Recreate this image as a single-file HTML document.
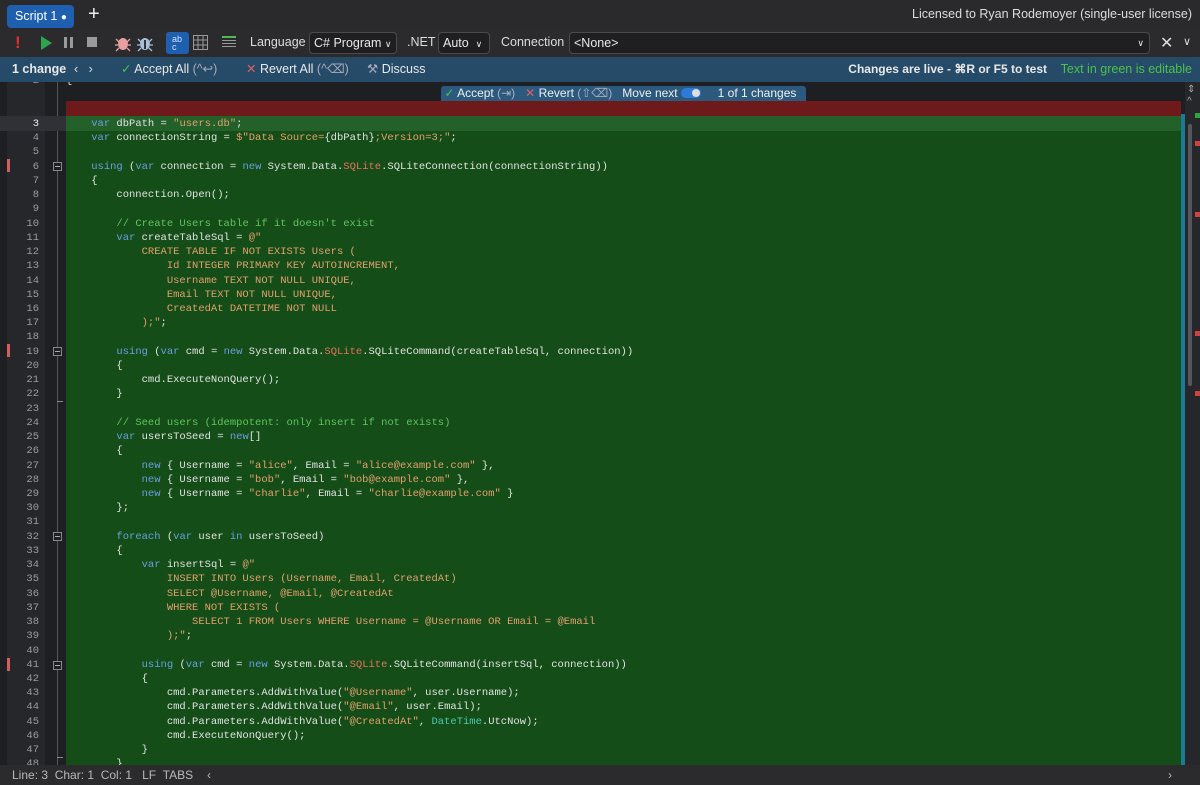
<!DOCTYPE html>
<html><head><meta charset="utf-8"><style>
*{margin:0;padding:0;box-sizing:border-box}
body{width:1200px;height:785px;background:#2b2b2e;font-family:"Liberation Sans",sans-serif;color:#dcdcdc;position:relative;overflow:hidden;font-size:12.5px}
.abs{position:absolute}
.top{left:0;top:0;width:1200px;height:30px;background:#2a2a2d}
.tab{left:7px;top:5px;width:67px;height:23px;background:#1f5faf;border-radius:4px;color:#fff;font-size:12.5px;line-height:23px;padding-left:8px}
.tb{left:0;top:30px;width:1200px;height:27px;background:#2b2b2e}
.sel{border:1px solid #4a4a4e;border-radius:4px;background:#1f1f22;height:22px;line-height:20px;padding-left:4px;color:#e8e8e8;font-size:12.5px}
.chg{left:0;top:57px;width:1200px;height:25px;background:#264b69;font-size:12.5px;line-height:25px}
.ed{left:0;top:82px;width:1200px;height:683px;background:#1e1f22;overflow:hidden}
.code{position:absolute;left:0;width:1200px;font-family:"Liberation Mono",monospace;font-size:10.5px;}
.ln{position:absolute;left:0;height:14.23px;line-height:14.23px;width:1200px;white-space:pre}
.num{position:absolute;left:0;width:39px;text-align:right;color:#9a9ca0}
.tx{position:absolute;left:66px;color:#e2e2e2}
.k{color:#6a9ee0}.s{color:#e2a06e}.c{color:#5fc45f}.r{color:#e8705f}.t{color:#4ec9b0}
.st{left:0;top:765px;width:1200px;height:20px;background:#2b2b2e;font-size:12px;color:#b8b8b8;line-height:20px}
</style></head><body>
<div class="abs top"></div>
<div class="abs tab">Script 1 <span style="font-size:10px">●</span></div>
<div class="abs" style="left:88px;top:3px;font-size:20px;color:#eee">+</div>
<div class="abs" style="right:8px;top:7px;font-size:12.5px;color:#ddd">Licensed to Ryan Rodemoyer (single-user license)</div>

<div class="abs tb"></div>
<div class="abs" style="left:15px;top:33px;color:#e03030;font-weight:bold;font-size:17px">!</div>
<svg class="abs" style="left:40px;top:36px" width="12" height="14"><path d="M1 0 L12 7 L1 14Z" fill="#2ea44f"/></svg>
<div class="abs" style="left:64px;top:37px;width:3px;height:11px;background:#9a9a9a"></div>
<div class="abs" style="left:70px;top:37px;width:3px;height:11px;background:#9a9a9a"></div>
<div class="abs" style="left:87px;top:37px;width:10px;height:10px;background:#9a9a9a"></div>
<svg class="abs" style="left:114px;top:34px" width="18" height="18"><ellipse cx="9" cy="10" rx="5" ry="6" fill="#e8a0a0"/><path d="M2 5L5 8M16 5L13 8M1 11H4M17 11H14M2 17L5 14M16 17L13 14" stroke="#e8a0a0" stroke-width="1.3"/></svg>
<svg class="abs" style="left:136px;top:34px" width="18" height="18"><ellipse cx="9" cy="10" rx="5" ry="6" fill="#a8c0d8"/><path d="M2 5L5 8M16 5L13 8M1 11H4M17 11H14M2 17L5 14M16 17L13 14" stroke="#a8c0d8" stroke-width="1.3"/><path d="M9 6V15" stroke="#333" stroke-width="2"/></svg>
<div class="abs" style="left:166px;top:32px;width:23px;height:22px;background:#1f5faf;border-radius:3px;color:#cfe0ff;font-size:9px;line-height:8px;padding:3px 0 0 6px">ab<br>c</div>
<svg class="abs" style="left:193px;top:35px" width="15" height="15"><rect x="0.5" y="0.5" width="14" height="14" fill="none" stroke="#999"/><path d="M5 0V15M10 0V15M0 5H15M0 10H15" stroke="#999"/></svg>
<div class="abs" style="left:222px;top:36px;width:14px;height:2px;background:#4cbb4c"></div>
<div class="abs" style="left:222px;top:40px;width:14px;height:1px;background:#999"></div>
<div class="abs" style="left:222px;top:43px;width:14px;height:1px;background:#999"></div>
<div class="abs" style="left:222px;top:46px;width:14px;height:1px;background:#999"></div>
<div class="abs" style="left:250px;top:35px;color:#ddd">Language</div>
<div class="abs sel" style="left:309px;top:32px;width:88px">C# Program <span style="font-size:9px">∨</span></div>
<div class="abs" style="left:407px;top:35px;color:#ddd">.NET</div>
<div class="abs sel" style="left:438px;top:32px;width:52px">Auto &nbsp;<span style="font-size:9px">∨</span></div>
<div class="abs" style="left:501px;top:35px;color:#ddd">Connection</div>
<div class="abs sel" style="left:569px;top:32px;width:581px">&lt;None&gt;<span style="position:absolute;right:5px;font-size:9px">∨</span></div>
<div class="abs" style="left:1160px;top:33px;font-size:16px;color:#ddd">✕</div>
<div class="abs" style="left:1183px;top:35px;font-size:11px;color:#ddd">∨</div>

<div class="abs chg"></div>
<div class="abs" style="left:12px;top:57px;line-height:25px;font-weight:bold;color:#e8e8e8">1 change</div>
<div class="abs" style="left:74px;top:57px;line-height:25px;color:#ddd">‹ &nbsp; ›</div>
<div class="abs" style="left:121px;top:57px;line-height:25px;color:#e8e8e8"><span style="color:#4cc04c">✓</span> Accept All <span style="color:#aab">(^↩)</span></div>
<div class="abs" style="left:246px;top:57px;line-height:25px;color:#e8e8e8"><span style="color:#e06060">✕</span> Revert All <span style="color:#aab">(^⌫)</span></div>
<div class="abs" style="left:367px;top:57px;line-height:25px;color:#e8e8e8"><span style="color:#aab">⚒</span> Discuss</div>
<div class="abs" style="right:153px;top:57px;line-height:25px;color:#e8e8e8;font-weight:bold;font-size:12px">Changes are live - ⌘R or F5 to test</div>
<div class="abs" style="right:8px;top:57px;line-height:25px;color:#4cc04c;font-size:12.5px">Text in green is editable</div>

<div class="abs ed">
  <div class="abs" style="left:7px;top:0;width:38px;height:683px;background:#26272b"></div>
  <div class="abs" style="left:45px;top:0;width:21px;height:683px;background:#1e1f22"></div>
  <div class="abs" style="left:57px;top:0;width:1px;height:683px;background:#555"></div>
  <div class="abs" style="left:66px;top:19px;width:1115px;height:15px;background:#6e1a1a"></div>
  <div class="abs" style="left:66px;top:34px;width:1115px;height:649px;background:#154d18"></div>
  <div class="abs" style="left:0;top:34px;width:66px;height:15px;background:#303136"></div>
  <div class="abs" style="left:66px;top:34px;width:1115px;height:15px;background:#23602a"></div>
  <div class="abs" style="left:441px;top:4px;width:365px;height:15px;background:#2c5a7e;border-radius:3px 3px 0 0;font-family:'Liberation Sans',sans-serif;font-size:12px;line-height:15px;color:#eee;white-space:pre"> <span style="color:#4cc04c">✓</span> Accept <span style="color:#aab">(⇥)</span>   <span style="color:#e06060">✕</span> Revert <span style="color:#aab">(⇧⌫)</span>   Move next <span style="display:inline-block;width:20px;height:10px;background:#2f7ad8;border-radius:5px;vertical-align:-1px;position:relative"><span style="position:absolute;right:1px;top:1px;width:8px;height:8px;border-radius:4px;background:#ddd"></span></span>     1 of 1 changes</div>
  <div class="abs" style="left:1181px;top:32px;width:4px;height:651px;background:#1a7a9a"></div>
  <div class="abs" style="left:1185px;top:0;width:15px;height:683px;background:#26272b"></div>
  <div class="abs" style="left:1188px;top:42px;width:4px;height:262px;background:#55575d;border-radius:2px"></div>
  <div class="abs" style="left:1187px;top:2px;font-size:10px;color:#aaa">⇕</div>
  <div class="abs" style="left:1187px;top:14px;font-size:10px;color:#aaa">^</div>
  <div class="abs" style="left:1195px;top:31px;width:5px;height:5px;background:#2ea43a"></div>
  <div class="abs" style="left:1195px;top:59px;width:5px;height:5px;background:#d04040"></div>
  <div class="abs" style="left:1195px;top:130px;width:5px;height:5px;background:#d04040"></div>
  <div class="abs" style="left:1195px;top:249px;width:5px;height:5px;background:#d04040"></div>
  <div class="abs" style="left:1195px;top:309px;width:5px;height:5px;background:#d04040"></div>
  <div class="abs" style="left:7px;top:77px;width:3px;height:13px;background:#d06060"></div>
  <div class="abs" style="left:7px;top:262px;width:3px;height:13px;background:#d06060"></div>
  <div class="abs" style="left:7px;top:576px;width:3px;height:13px;background:#d06060"></div>
  <div class="abs" style="left:53px;top:80px;width:9px;height:9px;border:1px solid #888;background:#1e1f22"></div>
  <div class="abs" style="left:53px;top:265px;width:9px;height:9px;border:1px solid #888;background:#1e1f22"></div>
  <div class="abs" style="left:53px;top:450px;width:9px;height:9px;border:1px solid #888;background:#1e1f22"></div>
  <div class="abs" style="left:53px;top:579px;width:9px;height:9px;border:1px solid #888;background:#1e1f22"></div>
  <div class="abs" style="left:55px;top:84px;width:5px;height:1px;background:#aaa"></div>
  <div class="abs" style="left:55px;top:269px;width:5px;height:1px;background:#aaa"></div>
  <div class="abs" style="left:55px;top:454px;width:5px;height:1px;background:#aaa"></div>
  <div class="abs" style="left:55px;top:583px;width:5px;height:1px;background:#aaa"></div>
  <div class="abs" style="left:57px;top:319px;width:6px;height:1px;background:#888"></div>
  <div class="abs" style="left:57px;top:675px;width:6px;height:1px;background:#888"></div>

  <div class="code" style="top:-8px">
    <div class="ln" style="top:0"><span class="num">2</span><span class="tx">{</span></div>
  </div>
  <div class="code" style="top:35px">
<div class="ln" style="top:0px"><span class="num" style="color:#eee">3</span><span class="tx">    <span class="k">var</span> dbPath = <span class="s">"users.db"</span>;</span></div>
<div class="ln" style="top:14.23px"><span class="num">4</span><span class="tx">    <span class="k">var</span> connectionString = <span class="s">$"Data Source=</span>{dbPath}<span class="s">;Version=3;"</span>;</span></div>
<div class="ln" style="top:28.46px"><span class="num">5</span></div>
<div class="ln" style="top:42.69px"><span class="num">6</span><span class="tx">    <span class="k">using</span> (<span class="k">var</span> connection = <span class="k">new</span> System.Data.<span class="r">SQLite</span>.SQLiteConnection(connectionString))</span></div>
<div class="ln" style="top:56.92px"><span class="num">7</span><span class="tx">    {</span></div>
<div class="ln" style="top:71.15px"><span class="num">8</span><span class="tx">        connection.Open();</span></div>
<div class="ln" style="top:85.38px"><span class="num">9</span></div>
<div class="ln" style="top:99.61px"><span class="num">10</span><span class="tx">        <span class="c">// Create Users table if it doesn't exist</span></span></div>
<div class="ln" style="top:113.84px"><span class="num">11</span><span class="tx">        <span class="k">var</span> createTableSql = <span class="s">@"</span></span></div>
<div class="ln" style="top:128.07px"><span class="num">12</span><span class="tx s">            CREATE TABLE IF NOT EXISTS Users (</span></div>
<div class="ln" style="top:142.3px"><span class="num">13</span><span class="tx s">                Id INTEGER PRIMARY KEY AUTOINCREMENT,</span></div>
<div class="ln" style="top:156.53px"><span class="num">14</span><span class="tx s">                Username TEXT NOT NULL UNIQUE,</span></div>
<div class="ln" style="top:170.76px"><span class="num">15</span><span class="tx s">                Email TEXT NOT NULL UNIQUE,</span></div>
<div class="ln" style="top:184.99px"><span class="num">16</span><span class="tx s">                CreatedAt DATETIME NOT NULL</span></div>
<div class="ln" style="top:199.22px"><span class="num">17</span><span class="tx"><span class="s">            );"</span>;</span></div>
<div class="ln" style="top:213.45px"><span class="num">18</span></div>
<div class="ln" style="top:227.68px"><span class="num">19</span><span class="tx">        <span class="k">using</span> (<span class="k">var</span> cmd = <span class="k">new</span> System.Data.<span class="r">SQLite</span>.SQLiteCommand(createTableSql, connection))</span></div>
<div class="ln" style="top:241.91px"><span class="num">20</span><span class="tx">        {</span></div>
<div class="ln" style="top:256.14px"><span class="num">21</span><span class="tx">            cmd.ExecuteNonQuery();</span></div>
<div class="ln" style="top:270.37px"><span class="num">22</span><span class="tx">        }</span></div>
<div class="ln" style="top:284.6px"><span class="num">23</span></div>
<div class="ln" style="top:298.83px"><span class="num">24</span><span class="tx">        <span class="c">// Seed users (idempotent: only insert if not exists)</span></span></div>
<div class="ln" style="top:313.06px"><span class="num">25</span><span class="tx">        <span class="k">var</span> usersToSeed = <span class="k">new</span>[]</span></div>
<div class="ln" style="top:327.29px"><span class="num">26</span><span class="tx">        {</span></div>
<div class="ln" style="top:341.52px"><span class="num">27</span><span class="tx">            <span class="k">new</span> { Username = <span class="s">"alice"</span>, Email = <span class="s">"alice@example.com"</span> },</span></div>
<div class="ln" style="top:355.75px"><span class="num">28</span><span class="tx">            <span class="k">new</span> { Username = <span class="s">"bob"</span>, Email = <span class="s">"bob@example.com"</span> },</span></div>
<div class="ln" style="top:369.98px"><span class="num">29</span><span class="tx">            <span class="k">new</span> { Username = <span class="s">"charlie"</span>, Email = <span class="s">"charlie@example.com"</span> }</span></div>
<div class="ln" style="top:384.21px"><span class="num">30</span><span class="tx">        };</span></div>
<div class="ln" style="top:398.44px"><span class="num">31</span></div>
<div class="ln" style="top:412.67px"><span class="num">32</span><span class="tx">        <span class="k">foreach</span> (<span class="k">var</span> user <span class="k">in</span> usersToSeed)</span></div>
<div class="ln" style="top:426.9px"><span class="num">33</span><span class="tx">        {</span></div>
<div class="ln" style="top:441.13px"><span class="num">34</span><span class="tx">            <span class="k">var</span> insertSql = <span class="s">@"</span></span></div>
<div class="ln" style="top:455.36px"><span class="num">35</span><span class="tx s">                INSERT INTO Users (Username, Email, CreatedAt)</span></div>
<div class="ln" style="top:469.59px"><span class="num">36</span><span class="tx s">                SELECT @Username, @Email, @CreatedAt</span></div>
<div class="ln" style="top:483.82px"><span class="num">37</span><span class="tx s">                WHERE NOT EXISTS (</span></div>
<div class="ln" style="top:498.05px"><span class="num">38</span><span class="tx s">                    SELECT 1 FROM Users WHERE Username = @Username OR Email = @Email</span></div>
<div class="ln" style="top:512.28px"><span class="num">39</span><span class="tx"><span class="s">                );"</span>;</span></div>
<div class="ln" style="top:526.51px"><span class="num">40</span></div>
<div class="ln" style="top:540.74px"><span class="num">41</span><span class="tx">            <span class="k">using</span> (<span class="k">var</span> cmd = <span class="k">new</span> System.Data.<span class="r">SQLite</span>.SQLiteCommand(insertSql, connection))</span></div>
<div class="ln" style="top:554.97px"><span class="num">42</span><span class="tx">            {</span></div>
<div class="ln" style="top:569.2px"><span class="num">43</span><span class="tx">                cmd.Parameters.AddWithValue(<span class="s">"@Username"</span>, user.Username);</span></div>
<div class="ln" style="top:583.43px"><span class="num">44</span><span class="tx">                cmd.Parameters.AddWithValue(<span class="s">"@Email"</span>, user.Email);</span></div>
<div class="ln" style="top:597.66px"><span class="num">45</span><span class="tx">                cmd.Parameters.AddWithValue(<span class="s">"@CreatedAt"</span>, <span class="t">DateTime</span>.UtcNow);</span></div>
<div class="ln" style="top:611.89px"><span class="num">46</span><span class="tx">                cmd.ExecuteNonQuery();</span></div>
<div class="ln" style="top:626.12px"><span class="num">47</span><span class="tx">            }</span></div>
<div class="ln" style="top:640.35px"><span class="num">48</span><span class="tx">        }</span></div>
  </div>
</div>

<div class="abs st"><span style="margin-left:12px">Line: 3 &nbsp;Char: 1 &nbsp;Col: 1 &nbsp; LF &nbsp;TABS</span><span style="position:absolute;left:207px">‹</span><span style="position:absolute;left:1168px">›</span></div>
</body></html>
